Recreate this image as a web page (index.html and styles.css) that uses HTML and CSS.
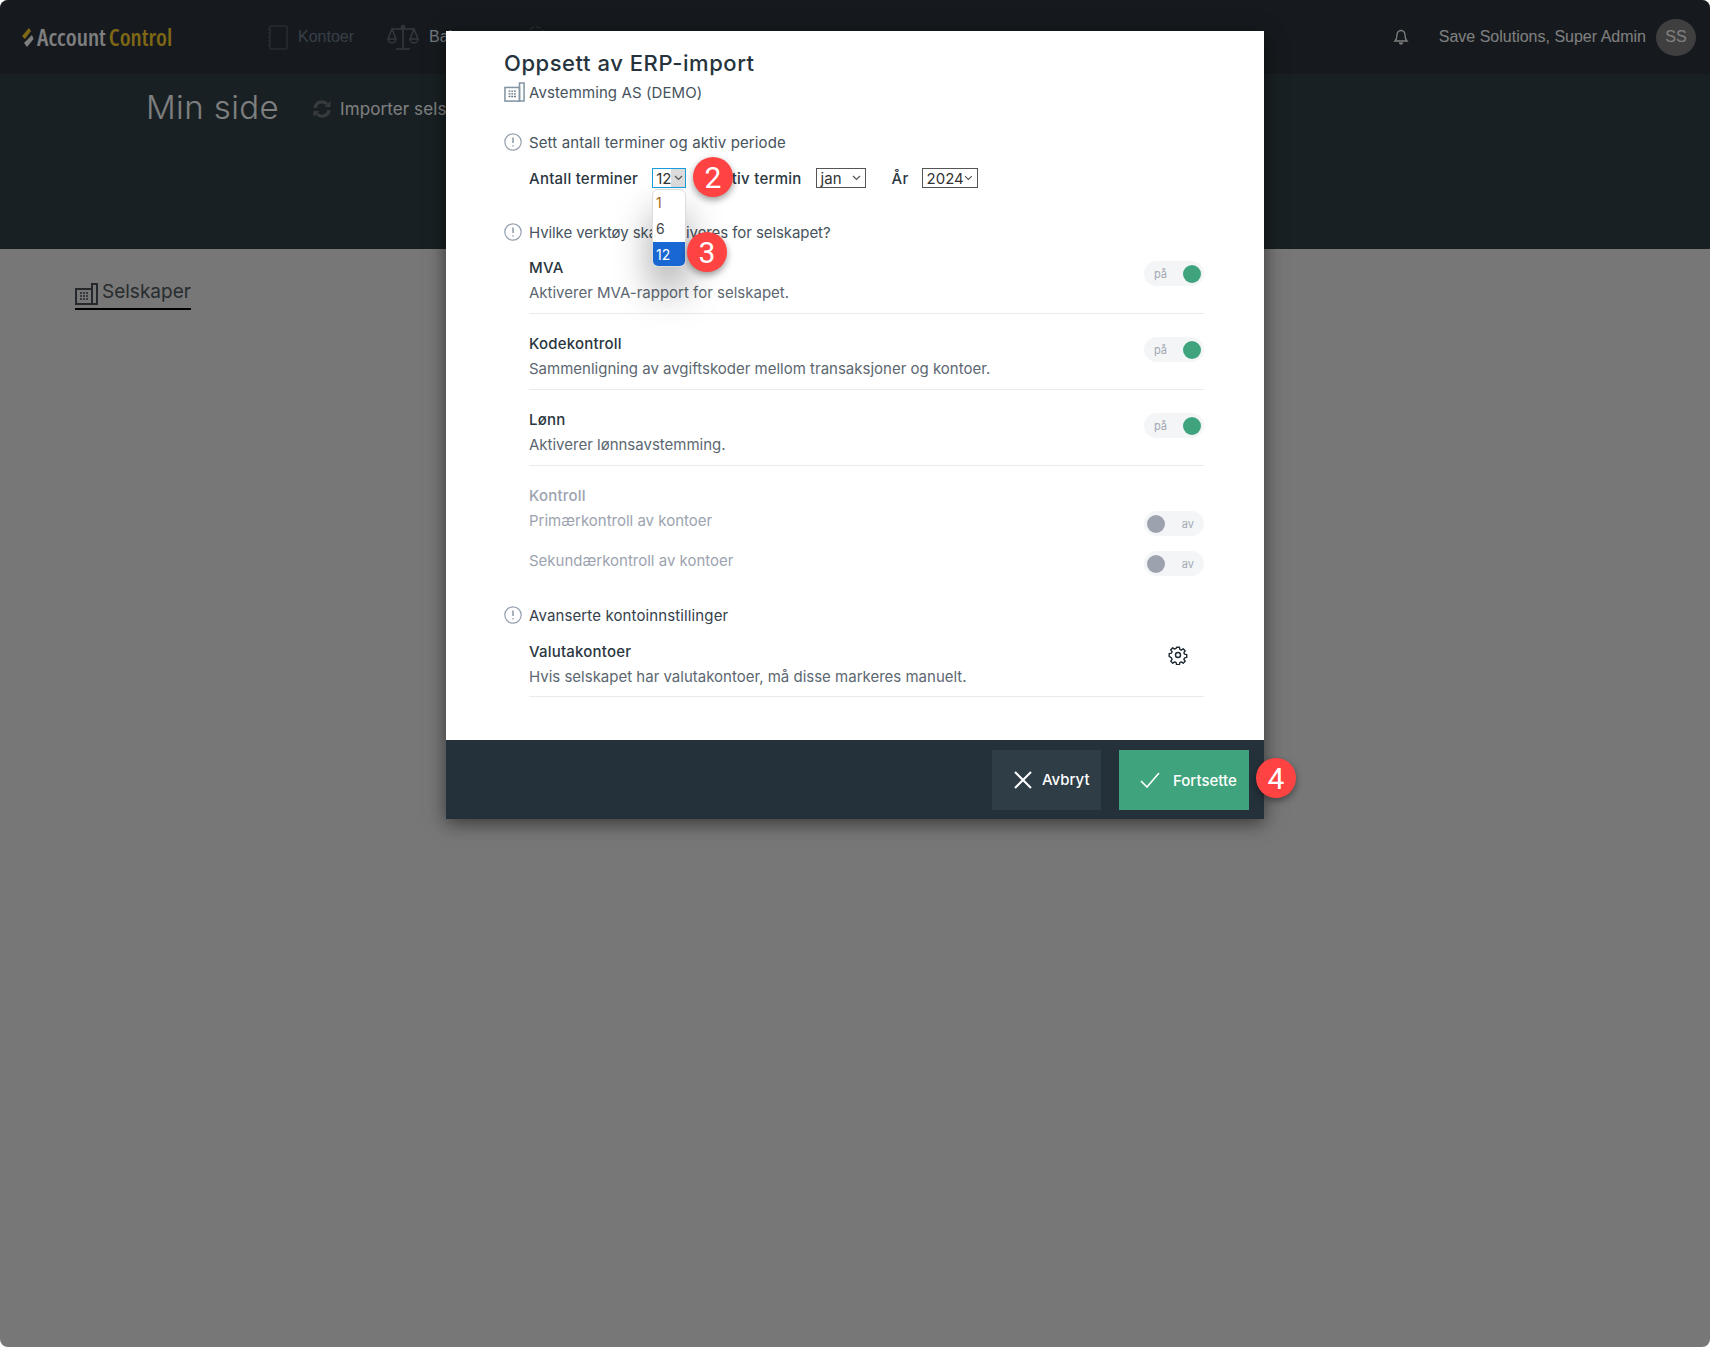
FILE: index.html
```html
<!DOCTYPE html>
<html lang="no">
<head>
    <meta charset="UTF-8">
    <meta name="viewport" content="width=device-width, initial-scale=1.0">
    <title>Min side</title>
    <link rel="stylesheet" href="styles.css">
</head>
<body>
    <div class="page">
        <header class="topbar">
            <div class="logo">
                <svg class="logo-mark" width="12" height="21" viewBox="0 0 12 21"><path d="M0 9l7-8 2 3-6 8z" fill="#ffd02a"/><path d="M2 16l8-8 1.500 4L5 20z" fill="#fff"/></svg>
                <span class="logo-a">Account</span><span class="logo-c">Control</span>
            </div>
            <nav class="nav">
                <a class="nav-item">
                    <svg width="21" height="25" viewBox="0 0 21 25" fill="none" stroke="#4e5862" stroke-width="1.500"><rect x="3" y="1" width="17" height="23" rx="1"/><path d="M1 4h3M1 8h3M1 12h3M1 16h3M1 20h3"/></svg>
                    <span>Kontoer</span>
                </a>
                <a class="nav-item nav-active">
                    <svg width="32" height="26" viewBox="0 0 32 26" fill="none" stroke="#6a737b" stroke-width="1.500"><path d="M16 3v21M9 25h14M5 5h22"/><path d="M5 5L1 15h8zM27 5l-4 10h8z"/><path d="M1 15a4 4 0 008 0M23 15a4 4 0 008 0"/><circle cx="16" cy="3" r="1.500"/></svg>
                    <span>Balanse</span>
                </a>
                <a class="nav-item nav-gear">
                    <svg width="20" height="26" viewBox="0 0 20 26" fill="none" stroke="#4e5862" stroke-width="1.500"><circle cx="10" cy="12" r="9" stroke-dasharray="5 2"/></svg>
                </a>
            </nav>
            <div class="user">
                <svg class="bell" width="16" height="16" viewBox="0 0 16 16" fill="none" stroke="#fff" stroke-width="1.300"><path d="M8 1.500c-2.700 0-4 2-4 4.500 0 3-1 5-2 6h12c-1-1-2-3-2-6 0-2.500-1.300-4.500-4-4.500z"/><path d="M6.500 13.500a1.500 1.500 0 003 0" fill="#fff"/></svg>
                <span class="user-name">Save Solutions, Super Admin</span>
                <span class="avatar">SS</span>
            </div>
        </header>
        <section class="hero">
            <h1>Min side</h1>
            <a class="import">
                <svg width="20" height="20" viewBox="0 0 20 20" fill="none" stroke="#70767a" stroke-width="3.200"><path d="M3 9a7 7 0 0 1 12-4"/><path d="M17 11a7 7 0 0 1-12 4"/><path d="M18.500 2v6h-6z" fill="#70767a" stroke="none"/><path d="M1.500 18v-6h6z" fill="#70767a" stroke="none"/></svg>
                Importer selskap
            </a>
        </section>
        <main class="content">
            <div class="tab">
                <svg class="building" width="23" height="22" viewBox="0 0 23 22" fill="none" stroke="#4a5058" stroke-width="2"><rect x="1" y="6" width="16" height="15"/><path d="M17 21h5V1h-5z"/><path d="M5 10h8M5 13h8M5 16h8" stroke-width="1.500" stroke-dasharray="2 1"/></svg>
                <span>Selskaper</span>
            </div>
        </main>
        <div class="overlay"></div>

        <div class="modal">
            <div class="modal-body">
                <h2>Oppsett av ERP-import</h2>
                <div class="company">
                    <svg class="building" width="21" height="20" viewBox="0 0 23 22" fill="none" stroke="#8296a6" stroke-width="1.700"><rect x="1" y="6" width="16" height="15"/><path d="M17 21h5V1h-5z"/><path d="M5 10h8M5 13h8M5 16h8" stroke="#5d6f7e" stroke-width="1.500" stroke-dasharray="2 1"/></svg>
                    <span>Avstemming AS (DEMO)</span>
                </div>

                <div class="step step-first">
                    <svg class="info" width="18" height="18" viewBox="0 0 18 18" fill="none" stroke="#94a0ae" stroke-width="1.200"><circle cx="9" cy="9" r="8.200"/><path d="M9 4.500v5.500M9 12.200v1.300" stroke="#7c8896" stroke-width="1.300"/></svg>
                    <span>Sett antall terminer og aktiv periode</span>
                </div>
                <div class="period">
                    <label class="period-label">Antall terminer</label>
                    <div class="fake-select select-open">12<span class="select-arrow"><svg width="9" height="6" viewBox="0 0 9 6" fill="none" stroke="#555" stroke-width="1.200"><path d="M1 1l3.500 3.500L8 1"/></svg></span></div>
                    <label class="period-label">Aktiv termin</label>
                    <div class="fake-select select-jan">jan<svg width="9" height="6" viewBox="0 0 9 6" fill="none" stroke="#555" stroke-width="1.200"><path d="M1 1l3.500 3.500L8 1"/></svg></div>
                    <label class="period-label">År</label>
                    <div class="fake-select select-year">2024<svg width="9" height="6" viewBox="0 0 9 6" fill="none" stroke="#555" stroke-width="1.200"><path d="M1 1l3.500 3.500L8 1"/></svg></div>
                </div>

                <div class="step step-second">
                    <svg class="info" width="18" height="18" viewBox="0 0 18 18" fill="none" stroke="#94a0ae" stroke-width="1.200"><circle cx="9" cy="9" r="8.200"/><path d="M9 4.500v5.500M9 12.200v1.300" stroke="#7c8896" stroke-width="1.300"/></svg>
                    <span>Hvilke verktøy skal aktiveres for selskapet?</span>
                </div>
                <div class="tools">
                    <div class="tool">
                        <div><h4>MVA</h4><p>Aktiverer MVA-rapport for selskapet.</p></div>
                        <div class="toggle toggle-on"><span>på</span><i></i></div>
                    </div>
                    <div class="tool">
                        <div><h4>Kodekontroll</h4><p>Sammenligning av avgiftskoder mellom transaksjoner og kontoer.</p></div>
                        <div class="toggle toggle-on"><span>på</span><i></i></div>
                    </div>
                    <div class="tool">
                        <div><h4>Lønn</h4><p>Aktiverer lønnsavstemming.</p></div>
                        <div class="toggle toggle-on"><span>på</span><i></i></div>
                    </div>
                    <div class="control">
                        <h4>Kontroll</h4>
                        <div class="control-row">
                            <p>Primærkontroll av kontoer</p>
                            <div class="toggle toggle-off"><i></i><span>av</span></div>
                        </div>
                        <div class="control-row">
                            <p>Sekundærkontroll av kontoer</p>
                            <div class="toggle toggle-off"><i></i><span>av</span></div>
                        </div>
                    </div>
                </div>

                <div class="step step-third">
                    <svg class="info" width="18" height="18" viewBox="0 0 18 18" fill="none" stroke="#94a0ae" stroke-width="1.200"><circle cx="9" cy="9" r="8.200"/><path d="M9 4.500v5.500M9 12.200v1.300" stroke="#7c8896" stroke-width="1.300"/></svg>
                    <span>Avanserte kontoinnstillinger</span>
                </div>
                <div class="tool tool-currency">
                    <div><h4>Valutakontoer</h4><p>Hvis selskapet har valutakontoer, må disse markeres manuelt.</p></div>
                    <svg class="gear" width="20" height="20" viewBox="0 0 24 24" fill="none" stroke="#1f2a33" stroke-width="1.700" stroke-linejoin="round"><circle cx="12" cy="12" r="3"/><path d="M10.300 3h3.400l.5 2.600 1.800.8 2.200-1.500 2.400 2.400-1.500 2.200.8 1.800 2.600.5v3.400l-2.600.5-.8 1.800 1.500 2.200-2.400 2.400-2.200-1.500-1.800.8-.5 2.600h-3.400l-.5-2.600-1.800-.8-2.200 1.500-2.400-2.400 1.500-2.200-.8-1.800L1.400 14v-3.400l2.600-.5.800-1.800-1.500-2.200 2.400-2.400 2.200 1.500 1.800-.8z" transform="translate(0 -.3)"/></svg>
                </div>
            </div>
            <footer class="modal-footer">
                <button class="btn btn-cancel">
                    <svg width="20" height="20" viewBox="0 0 20 20" fill="none" stroke="#fff" stroke-width="2"><path d="M2 2l16 16M18 2L2 18"/></svg>
                    Avbryt
                </button>
                <button class="btn btn-ok">
                    <svg width="20" height="16" viewBox="0 0 20 16" fill="none" stroke="#fff" stroke-width="1.600"><path d="M1 9l6 6L19 1"/></svg>
                    <span class="btn-ok-label">Fortsette</span>
                </button>
            </footer>
        </div>

        <ul class="dropdown">
            <li class="opt-first">1</li>
            <li>6</li>
            <li class="opt-selected">12</li>
        </ul>
        <span class="badge badge-2">2</span>
        <span class="badge badge-3">3</span>
        <span class="badge badge-4">4</span>
    </div>
</body>
</html>
```

FILE: styles.css
```css
* {
    box-sizing: border-box;
}
html, body {
    margin: 0;
    background: #fff;
}
body {
    font-family: Inter, "Open Sans", sans-serif;
    color: #2a3640;
}
h1, h2, h4, p, ul {
    margin: 0;
    padding: 0;
}
.page {
    position: relative;
    width: 1710px;
    height: 1347px;
    overflow: hidden;
    border-radius: 8px;
    background: #ecefed;
}
.overlay {
    position: absolute;
    inset: 0;
    background: rgba(0, 0, 0, 0.5);
}

/* header */
.topbar {
    display: flex;
    align-items: center;
    height: 74px;
    padding: 0 14px 0 22px;
    background: #2c343d;
    font-family: "Liberation Sans", Arial, sans-serif;
}
.logo {
    display: flex;
    align-items: center;
    width: 245px;
    font-family: "Open Sans", sans-serif;
    font-size: 23.500px;
    font-stretch: 75%;
    font-weight: 600;
}
.logo-mark {
    margin-right: 3px;
}
.logo-a {
    color: #fff;
    margin-right: 3px;
}
.logo-c {
    color: #ffd02a;
}
.nav {
    display: flex;
    align-items: center;
    flex: 1;
    gap: 33px;
    font-size: 16px;
}
.nav-item {
    display: flex;
    align-items: center;
    gap: 10px;
    color: #6e7f90;
}
.nav-active {
    color: #e0eef8;
}
.nav-gear {
    margin-left: 6px;
}
.user {
    display: flex;
    align-items: center;
    color: #fff;
    font-size: 16px;
}
.bell {
    margin-right: 30px;
}
.avatar {
    display: flex;
    align-items: center;
    justify-content: center;
    width: 40px;
    height: 37px;
    margin-left: 10px;
    border-radius: 50%;
    background: #7e7e7e;
    color: #fff;
}

/* hero */
.hero {
    display: flex;
    align-items: flex-start;
    height: 175px;
    padding: 10px 0 0 146px;
    background: #304047;
    color: #fff;
}
.hero h1 {
    width: 166px;
    font-size: 33px;
    font-weight: 300;
    letter-spacing: 0.4px;
    line-height: 46px;
    color: #fff;
}
.import {
    display: flex;
    align-items: center;
    gap: 8px;
    margin-top: 15px;
    font-size: 17px;
    letter-spacing: 0.1px;
    color: #fff;
}

.content {
    padding: 34px 0 0 75px;
}
.tab {
    display: inline-flex;
    align-items: flex-start;
    gap: 4px;
    padding-bottom: 3px;
    border-bottom: 2px solid #000;
    font-size: 19px;
    line-height: 18px;
    color: #50585e;
}

/* modal */
.modal {
    position: absolute;
    left: 446px;
    top: 31px;
    width: 818px;
    height: 788px;
    display: flex;
    flex-direction: column;
    background: #fff;
    box-shadow: 0 4px 18px rgba(0, 0, 0, 0.55);
}
.modal-body {
    flex: 1;
    padding: 17px 60px 0 58px;
    font-size: 15px;
}
.modal h2 {
    font-size: 22px;
    font-weight: 500;
    letter-spacing: 0.55px;
    line-height: 30px;
    color: #26333d;
}
.company {
    display: flex;
    align-items: center;
    gap: 4px;
    height: 24px;
    margin-top: 2px;
    letter-spacing: 0.1px;
    color: #47535d;
}
.step {
    display: flex;
    align-items: center;
    gap: 7px;
    height: 20px;
    letter-spacing: 0.12px;
    color: #47535d;
}
.step-first {
    margin-top: 28px;
}
.step-second {
    margin-top: 34px;
    letter-spacing: -0.08px;
}
.step-third {
    margin-top: 19px;
    color: #35414b;
}
.period {
    display: flex;
    align-items: center;
    height: 20px;
    margin: 16px 0 0 25px;
}
.period-label {
    font-weight: 500;
    letter-spacing: 0.25px;
    color: #2a3640;
}
.fake-select {
    display: flex;
    align-items: center;
    justify-content: space-between;
    height: 20px;
    padding: 0 4px;
    border: 1px solid #555;
    color: #333;
}
.select-open {
    width: 34px;
    margin: 0 26px 0 14px;
    padding: 0 0 0 3px;
    border: 1px solid #1a9bdc;
}
.select-arrow {
    display: flex;
    align-items: center;
    justify-content: center;
    width: 15px;
    height: 18px;
    background: #dcdcdc;
}
.select-jan {
    width: 50px;
    margin: 0 26px 0 14px;
}
.select-year {
    width: 56px;
    margin-left: 13px;
}
.tools {
    margin: -4px 0 0 25px;
}
.tool {
    display: flex;
    align-items: flex-start;
    justify-content: space-between;
    height: 76px;
    padding-top: 20px;
    border-bottom: 1px solid #e8eaec;
}
.tool h4, .control h4 {
    font-size: 15px;
    font-weight: 500;
    letter-spacing: 0.2px;
    line-height: 20px;
    color: #2a3640;
}
.tool p, .control p {
    margin-top: 5px;
    line-height: 20px;
    color: #5c6771;
}
.tool .toggle {
    margin-top: 3px;
}
.toggle {
    display: flex;
    align-items: center;
    justify-content: space-between;
    width: 60px;
    height: 25px;
    padding: 0 3px 0 10px;
    border-radius: 13px;
    background: #f4f5f7;
    font-size: 11px;
    color: #a3a9b2;
}
.toggle i {
    width: 18px;
    height: 18px;
    border-radius: 50%;
    background: #3fa47d;
}
.toggle-off {
    margin-top: 5px;
    padding: 0 10px 0 3px;
}
.toggle-off i {
    background: #9ca3af;
}
.control {
    padding-top: 20px;
}
.control h4 {
    color: #9ca3af;
}
.control p {
    color: #9ca3af;
}
.control-row {
    display: flex;
    justify-content: space-between;
    height: 40px;
}
.tool-currency {
    margin-left: 25px;
    height: 72px;
    padding-top: 17px;
}
.gear {
    margin: 3px 16px 0 0;
}
.modal-footer {
    display: flex;
    justify-content: flex-end;
    align-items: center;
    gap: 18px;
    height: 79px;
    padding: 0 15px 0 0;
    background: #24313a;
}
.btn {
    display: flex;
    align-items: center;
    height: 60px;
    border: none;
    color: #fff;
    font-family: inherit;
    font-size: 15px;
    font-weight: 500;
}
.btn-cancel {
    width: 109px;
    gap: 9px;
    padding-left: 21px;
    background: #2f3d47;
}
.btn-ok {
    width: 130px;
    gap: 13px;
    padding-left: 21px;
    background: #3fa47d;
}
.btn-ok-label {
    margin-top: 2px;
}

/* open select list */
.dropdown {
    position: absolute;
    left: 652px;
    top: 189px;
    width: 34px;
    height: 78px;
    overflow: hidden;
    border: 1px solid #dcdcdc;
    border-radius: 6px;
    list-style: none;
    background: #fff;
    font-size: 14px;
    box-shadow: 0 24px 36px rgba(0, 0, 0, 0.35);
}
.dropdown li {
    height: 26px;
    padding-left: 3px;
    line-height: 26px;
    color: #444;
}
.dropdown .opt-first {
    color: #a06a20;
}
.dropdown .opt-selected {
    background: #1967d2;
    color: #fff;
}

/* numbered callouts */
.badge {
    position: absolute;
    display: flex;
    align-items: center;
    justify-content: center;
    width: 40px;
    height: 40px;
    border-radius: 50%;
    background: #ff4343;
    box-shadow: 0 3px 7px rgba(0, 0, 0, 0.4);
    color: #fff;
    font-family: Roboto, sans-serif;
    font-size: 30px;
}
.badge-2 {
    left: 693px;
    top: 157px;
}
.badge-3 {
    left: 687px;
    top: 232px;
}
.badge-4 {
    left: 1256px;
    top: 758px;
}
```
